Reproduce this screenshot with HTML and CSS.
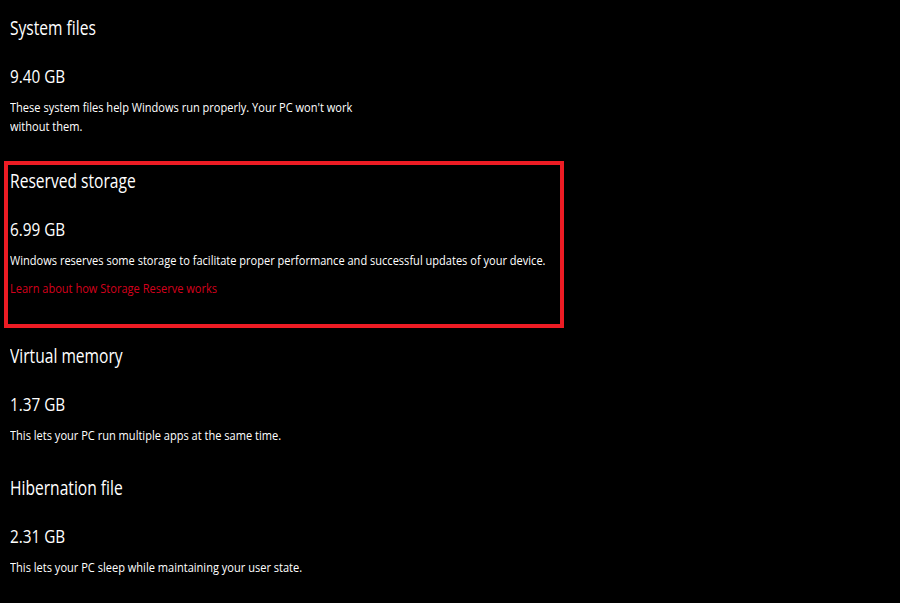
FILE: index.html
```html
<!DOCTYPE html>
<html lang="en">
<head>
<meta charset="utf-8">
<title>Storage usage - System &amp; reserved</title>
<link rel="stylesheet" href="styles.css">
</head>
<body>
<main class="page">
  <section class="item item-first">
    <h2 class="title">System files</h2>
    <p class="value">9.40 GB</p>
    <p class="desc desc-wrap">These system files help Windows run properly. Your PC won't work without them.</p>
  </section>
  <section class="item item-highlight">
    <h2 class="title">Reserved storage</h2>
    <p class="value">6.99 GB</p>
    <p class="desc">Windows reserves some storage to facilitate proper performance and successful updates of your device.</p>
    <a class="link" href="#">Learn about how Storage Reserve works</a>
  </section>
  <section class="item item-after">
    <h2 class="title">Virtual memory</h2>
    <p class="value">1.37 GB</p>
    <p class="desc">This lets your PC run multiple apps at the same time.</p>
  </section>
  <section class="item">
    <h2 class="title">Hibernation file</h2>
    <p class="value">2.31 GB</p>
    <p class="desc">This lets your PC sleep while maintaining your user state.</p>
  </section>
</main>
</body>
</html>
```
FILE: styles.css
```css
html, body {
  margin: 0;
  padding: 0;
  background: #000;
}
body {
  width: 900px;
  height: 603px;
  overflow: hidden;
  color: #fff;
  font-family: "Open Sans", "Noto Sans", "Liberation Sans", sans-serif;
}
.page {
  display: flex;
  flex-direction: column;
  padding: 12px 0 0 10px;
}
.item {
  display: flex;
  flex-direction: column;
  align-items: flex-start;
  margin-top: 27px;
}
.item-first {
  margin-top: 0;
}
.item-highlight {
  margin: 25px 0 0 -6px;
  width: 550px;
  border: 4px solid #ed1c24;
  padding: 0 0 26px 2px;
}
.item-after {
  margin-top: 12px;
}
.title, .value, .desc, .link {
  margin: 0;
  transform: scaleX(0.85);
  transform-origin: 0 0;
  white-space: nowrap;
}
.title {
  padding-top: 2px;
  font-size: 20px;
  line-height: 28px;
  font-weight: 400;
  transform: scaleX(0.78);
}
.value {
  margin-top: 22px;
  font-size: 18px;
  line-height: 24px;
}
.desc {
  margin-top: 10px;
  font-size: 13px;
  line-height: 19px;
}
.desc-wrap {
  white-space: normal;
  width: 420px;
}
.link {
  margin-top: 9px;
  font-size: 13px;
  line-height: 19px;
  color: #d4001c;
  text-decoration: none;
}
```
